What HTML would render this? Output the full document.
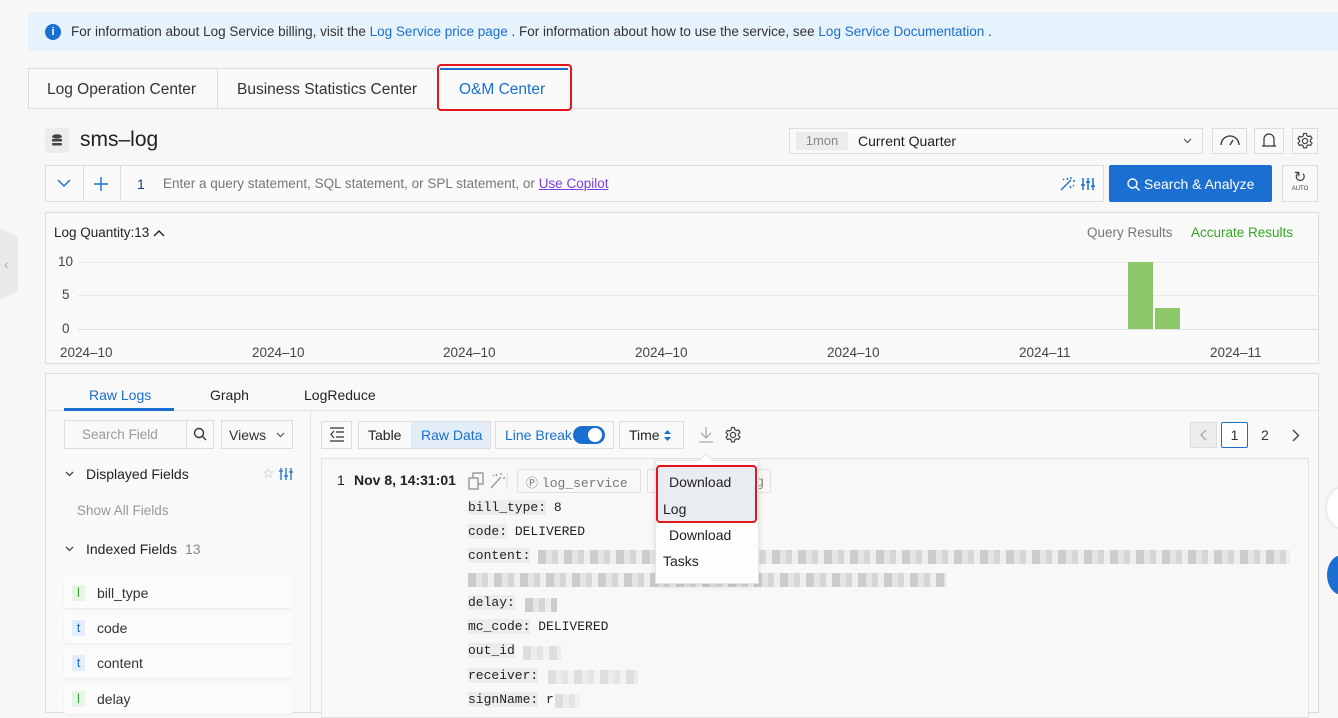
<!DOCTYPE html>
<html><head><meta charset="utf-8"><style>
*{box-sizing:border-box;margin:0;padding:0}
body{width:1338px;height:710px;overflow:hidden;background:#f7f7f7;font-family:"Liberation Sans",sans-serif;font-size:14px;color:#333;position:relative}
.a{position:absolute}
.b{border:1px solid #dcdcdc;background:#f9f9f9}
.mono{font-family:"Liberation Mono",monospace;font-size:13px}
.blue{color:#1a6fd0}
.blur{background:repeating-linear-gradient(90deg,#ccc 0 8px,#e4e4e4 8px 14px,#d6d6d6 14px 20px,#eee 20px 26px);height:14px}
.fld{position:absolute;left:64px;width:229px;height:30px;background:#fbfbfb;box-shadow:0 1px 2px rgba(0,0,0,.06);border-radius:3px}
.fld span.t{position:absolute;left:8px;top:7px;width:13px;height:16px;border-radius:2px;font-size:13px;text-align:center;line-height:16px}
.fld span.n{position:absolute;left:33px;top:7px;font-size:14px}
.kv{position:absolute;left:468px;font-family:"Liberation Mono",monospace;font-size:13px;color:#222}
.kv i{font-style:normal;background:#ececec}
</style></head><body>
<svg width="0" height="0" style="position:absolute"><defs><g id="gear"><circle cx="9" cy="9" r="2.6" fill="none" stroke="#444" stroke-width="1.3"/><path d="M7.6 1.5h2.8l.5 2.2 1.6.9 2.1-.7 1.4 2.4-1.6 1.5v1.8l1.6 1.5-1.4 2.4-2.1-.7-1.6.9-.5 2.2H7.6l-.5-2.2-1.6-.9-2.1.7-1.4-2.4 1.6-1.5V8.2L2 6.7l1.4-2.4 2.1.7 1.6-.9z" fill="none" stroke="#444" stroke-width="1.2" stroke-linejoin="round"/></g></defs></svg>
<div class="a" style="left:0;top:228px;width:18px;height:72px;background:#e9e9e9;clip-path:polygon(0 0,100% 12%,100% 88%,0 100%)"></div>
<div class="a" style="left:4px;top:256px;color:#aaa;font-size:14px">‹</div>
<div class="a" style="left:28px;top:12px;width:1310px;height:39px;background:#e6f2fc"></div>
<div class="a" style="left:45px;top:24px;width:16px;height:16px;border-radius:50%;background:#1a6fd0;color:#fff;font-size:11px;font-weight:bold;text-align:center;line-height:16px">i</div>
<div class="a" style="left:71px;top:24px;font-size:13.5px;color:#333">For information about Log Service billing, visit the <span class="blue">Log Service price page</span> . For information about how to use the service, see <span class="blue">Log Service Documentation</span> .</div>
<div class="a" style="left:28px;top:108px;width:1310px;height:1px;background:#e0e0e0"></div>
<div class="a b" style="left:28px;top:68px;width:190px;height:41px;font-size:15.5px;padding:12px 0 0 18px">Log Operation Center</div>
<div class="a b" style="left:217px;top:68px;width:221px;height:41px;font-size:15.5px;padding:12px 0 0 19px">Business Statistics Center</div>
<div class="a" style="left:440px;top:68px;width:128px;height:41px;background:#fafafa;border-top:2px solid #1a6fd0;font-size:15.5px;padding:11px 0 0 19px;color:#1a6fd0">O&amp;M Center</div>
<div class="a" style="left:437px;top:64px;width:135px;height:47px;border:2.5px solid #e4161b;border-radius:4px"></div>
<div class="a" style="left:45px;top:128px;width:24px;height:25px;background:#ececec;border-radius:3px"></div>
<svg class="a" style="left:51px;top:134px" width="12" height="13"><ellipse cx="6" cy="2.5" rx="5" ry="2.2" fill="#444"/><rect x="1" y="5" width="10" height="2.5" fill="#444"/><rect x="1" y="9" width="10" height="2.5" rx="1" fill="#444"/></svg>
<div class="a" style="left:80px;top:128px;font-size:21px;color:#222">sms–log</div>
<div class="a b" style="left:789px;top:128px;width:414px;height:26px"></div>
<div class="a" style="left:796px;top:132px;width:52px;height:18px;background:#ececec;color:#888;font-size:13px;text-align:center;line-height:18px">1mon</div>
<div class="a" style="left:858px;top:133px;font-size:14px;color:#222">Current Quarter</div>
<svg class="a" style="left:1183px;top:138px" width="9" height="6"><path d="M1 1l3.5 3.5L8 1" fill="none" stroke="#555" stroke-width="1.2"/></svg>
<div class="a b" style="left:1212px;top:128px;width:35px;height:26px"></div>
<svg class="a" style="left:1219px;top:133px" width="22" height="14"><path d="M2 12A9 9 0 0 1 20 12" fill="none" stroke="#333" stroke-width="1.3"/><path d="M11 12L14 7" stroke="#333" stroke-width="1.3"/></svg>
<div class="a b" style="left:1254px;top:128px;width:30px;height:26px"></div>
<svg class="a" style="left:1261px;top:131px" width="16" height="20"><path d="M3 15V8a5 5 0 0 1 10 0v7zM1 15h14" fill="none" stroke="#333" stroke-width="1.2"/></svg>
<div class="a b" style="left:1292px;top:128px;width:26px;height:26px"></div>
<svg class="a" style="left:1296px;top:132px" width="18" height="18"><use href="#gear"/></svg>
<div class="a b" style="left:45px;top:165px;width:1059px;height:37px;background:#fafafa"></div>
<div class="a" style="left:83px;top:165px;width:1px;height:37px;background:#ddd"></div>
<div class="a" style="left:120px;top:165px;width:1px;height:37px;background:#ddd"></div>
<svg class="a" style="left:57px;top:179px" width="14" height="9"><path d="M1 1l6 6 6-6" fill="none" stroke="#1a6fd0" stroke-width="1.5"/></svg>
<svg class="a" style="left:94px;top:177px" width="14" height="14"><path d="M7 0v14M0 7h14" stroke="#1a6fd0" stroke-width="1.4"/></svg>
<div class="a" style="left:137px;top:176px;font-size:14px;color:#1a3d7a">1</div>
<div class="a" style="left:163px;top:176px;font-size:13.5px;color:#777">Enter a query statement, SQL statement, or SPL statement, or <span style="color:#7b3fe4;text-decoration:underline">Use Copilot</span></div>
<svg class="a" style="left:1059px;top:176px" width="40" height="16"><path d="M2 14L12 4M8 2l1 2M12 1v2M14 5h2M4 3l1 1M11 10l1 2M14 9l1 1" stroke="#1a6fd0" stroke-width="1.4" fill="none"/><path d="M24 2v12M29 2v12M34 2v12M22 9h4M27 6h4M32 10h4" stroke="#1a6fd0" stroke-width="1.5"/></svg>
<div class="a" style="left:1109px;top:165px;width:163px;height:37px;background:#1a6fd0;border-radius:2px;color:#fff;font-size:14px;padding:11px 0 0 18px"><svg width="13" height="13" style="vertical-align:-2px"><circle cx="5.5" cy="5.5" r="4.5" fill="none" stroke="#fff" stroke-width="1.4"/><path d="M9 9l3.5 3.5" stroke="#fff" stroke-width="1.4"/></svg> Search &amp; Analyze</div>
<div class="a b" style="left:1282px;top:165px;width:36px;height:37px;text-align:center"><div style="font-size:15px;color:#444;margin-top:2px">↻</div><div style="font-size:6px;color:#444">AUTO</div></div>
<div class="a b" style="left:45px;top:212px;width:1274px;height:152px"></div>
<div class="a" style="left:54px;top:225px;font-size:13.5px;color:#222">Log Quantity:13 <svg width="12" height="8"><path d="M1 7l5-5 5 5" fill="none" stroke="#222" stroke-width="1.4"/></svg></div>
<div class="a" style="left:1087px;top:225px;font-size:13.5px;color:#777">Query Results</div>
<div class="a" style="left:1191px;top:225px;font-size:13.5px;color:#34a822">Accurate Results</div>
<div class="a" style="left:58px;top:254px;font-size:13.5px;color:#444">10</div>
<div class="a" style="left:62px;top:287px;font-size:13.5px;color:#444">5</div>
<div class="a" style="left:62px;top:321px;font-size:13.5px;color:#444">0</div>
<div class="a" style="left:78px;top:262px;width:1240px;height:1px;background:#e8e8e8"></div>
<div class="a" style="left:78px;top:295px;width:1240px;height:1px;background:#e8e8e8"></div>
<div class="a" style="left:78px;top:329px;width:1240px;height:1px;background:#e0e0e0"></div>
<div class="a" style="left:1128px;top:262px;width:25px;height:67px;background:#8cc86a"></div>
<div class="a" style="left:1155px;top:308px;width:25px;height:21px;background:#8cc86a"></div>
<div class="a" style="left:60px;top:345px;width:1240px;font-size:13.5px;color:#444">
<span class="a" style="left:0">2024–10</span><span class="a" style="left:192px">2024–10</span><span class="a" style="left:383px">2024–10</span><span class="a" style="left:575px">2024–10</span><span class="a" style="left:767px">2024–10</span><span class="a" style="left:959px">2024–11</span><span class="a" style="left:1150px">2024–11</span></div>
<div class="a b" style="left:45px;top:373px;width:1274px;height:340px"></div>
<div class="a" style="left:46px;top:410px;width:1272px;height:1px;background:#e4e4e4"></div>
<div class="a blue" style="left:89px;top:387px;font-size:14px">Raw Logs</div>
<div class="a" style="left:64px;top:408px;width:110px;height:3px;background:#1a6fd0"></div>
<div class="a" style="left:210px;top:387px;font-size:14px;color:#222">Graph</div>
<div class="a" style="left:304px;top:387px;font-size:14px;color:#222">LogReduce</div>
<div class="a" style="left:310px;top:411px;width:1px;height:300px;background:#e4e4e4"></div>
<div class="a b" style="left:64px;top:420px;width:123px;height:29px;color:#999;font-size:13.5px;padding:6px 0 0 17px">Search Field</div>
<div class="a b" style="left:186px;top:420px;width:28px;height:29px"></div>
<svg class="a" style="left:193px;top:427px" width="14" height="14"><circle cx="6" cy="6" r="4.5" fill="none" stroke="#333" stroke-width="1.4"/><path d="M9.5 9.5L13 13" stroke="#333" stroke-width="1.4"/></svg>
<div class="a b" style="left:221px;top:420px;width:72px;height:29px;font-size:14px;padding:6px 0 0 7px;color:#333">Views</div>
<svg class="a" style="left:276px;top:432px" width="9" height="6"><path d="M1 1l3.5 3.5L8 1" fill="none" stroke="#555" stroke-width="1.2"/></svg>
<svg class="a" style="left:65px;top:471px" width="9" height="6"><path d="M1 1l3.5 3.5L8 1" fill="none" stroke="#444" stroke-width="1.3"/></svg>
<div class="a" style="left:86px;top:466px;font-size:14px;color:#222">Displayed Fields</div>
<div class="a" style="left:262px;top:465px;font-size:14px;color:#bbb">☆</div>
<svg class="a" style="left:278px;top:467px" width="16" height="14"><path d="M3 1v12M8 1v12M13 1v12M1 4h4M6 9h4M11 5h4" stroke="#1a6fd0" stroke-width="1.3"/></svg>
<div class="a" style="left:77px;top:503px;font-size:13.5px;color:#999">Show All Fields</div>
<svg class="a" style="left:65px;top:546px" width="9" height="6"><path d="M1 1l3.5 3.5L8 1" fill="none" stroke="#444" stroke-width="1.3"/></svg>
<div class="a" style="left:86px;top:541px;font-size:14px;color:#222">Indexed Fields <span style="color:#888;margin-left:4px">13</span></div>
<div class="fld" style="top:578px"><span class="t" style="background:#e5f6e5;color:#3aa53a">l</span><span class="n">bill_type</span></div>
<div class="fld" style="top:613px"><span class="t" style="background:#e4eefa;color:#1a6fd0">t</span><span class="n">code</span></div>
<div class="fld" style="top:648px"><span class="t" style="background:#e4eefa;color:#1a6fd0">t</span><span class="n">content</span></div>
<div class="fld" style="top:684px"><span class="t" style="background:#e5f6e5;color:#3aa53a">l</span><span class="n">delay</span></div>
<div class="a b" style="left:321px;top:421px;width:31px;height:28px"></div>
<svg class="a" style="left:329px;top:427px" width="16" height="15"><path d="M1 1h14M1 14h14M7 5h8M7 10h8M5 4L2 7.5 5 11" fill="none" stroke="#333" stroke-width="1.2"/></svg>
<div class="a b" style="left:358px;top:421px;width:133px;height:28px"></div>
<div class="a" style="left:368px;top:427px;font-size:14px;color:#222">Table</div>
<div class="a" style="left:411px;top:422px;width:79px;height:26px;background:#e3edf8"></div>
<div class="a blue" style="left:421px;top:427px;font-size:14px">Raw Data</div>
<div class="a b" style="left:495px;top:421px;width:119px;height:28px"></div>
<div class="a blue" style="left:505px;top:427px;font-size:14px">Line Break</div>
<div class="a" style="left:573px;top:426px;width:32px;height:18px;border-radius:9px;background:#1a6fd0"></div>
<div class="a" style="left:588px;top:428px;width:14px;height:14px;border-radius:50%;background:#fff"></div>
<div class="a b" style="left:619px;top:421px;width:65px;height:28px;font-size:14px;padding:5px 0 0 9px;color:#222">Time</div>
<svg class="a" style="left:663px;top:429px" width="9" height="13"><path d="M1 5l3.5-4L8 5zM1 8l3.5 4L8 8z" fill="#1a6fd0"/></svg>
<svg class="a" style="left:698px;top:426px" width="16" height="18"><path d="M8 1v11M3 7l5 5 5-5M1 16h14" fill="none" stroke="#aaa" stroke-width="1.3"/></svg>
<svg class="a" style="left:724px;top:426px" width="18" height="18"><use href="#gear"/></svg>
<div class="a" style="left:1190px;top:422px;width:27px;height:26px;background:#ededed;border:1px solid #ddd"></div>
<svg class="a" style="left:1200px;top:429px" width="7" height="12"><path d="M6 1L1 6l5 5" fill="none" stroke="#aaa" stroke-width="1.3"/></svg>
<div class="a" style="left:1221px;top:422px;width:27px;height:26px;border:1px solid #1a6fd0;border-radius:2px;background:#fff;text-align:center;line-height:24px;font-size:14px">1</div>
<div class="a" style="left:1261px;top:427px;font-size:14px">2</div>
<svg class="a" style="left:1292px;top:429px" width="8" height="13"><path d="M1 1l5.5 5.5L1 12" fill="none" stroke="#444" stroke-width="1.4"/></svg>
<div class="a" style="left:321px;top:458px;width:988px;height:260px;border:1px solid #e2e2e2;background:#f8f8f8"></div>
<div class="a" style="left:337px;top:472px;font-size:14px;color:#222">1</div>
<div class="a" style="left:354px;top:472px;font-size:14px;color:#222;font-weight:bold">Nov 8, 14:31:01</div>
<svg class="a" style="left:468px;top:472px" width="40" height="18"><path d="M1 6h9v11H1zM5 6V1h10v11h-5" fill="none" stroke="#888" stroke-width="1.2"/><path d="M23 16L33 5M28 2l1 2M33 1v2M35 6h2M25 3l1 1" stroke="#888" stroke-width="1.2" fill="none"/><path d="M39 1v16" stroke="#ddd"/></svg>
<div class="a" style="left:517px;top:469px;width:124px;height:24px;border:1px solid #e0e0e0;border-radius:2px;color:#777;padding:4px 0 0 8px"><span style="font-size:12px">Ⓟ</span> <span class="mono">log_service</span></div>
<div class="a" style="left:647px;top:469px;width:124px;height:24px;border:1px solid #e0e0e0;border-radius:2px;color:#888;padding:3px 0 0 108px">g</div>
<div class="kv" style="top:500px"><i>bill_type:</i> 8</div>
<div class="kv" style="top:524px"><i>code:</i> DELIVERED</div>
<div class="kv" style="top:548px"><i>content:</i></div>
<div class="a blur" style="left:538px;top:550px;width:752px"></div>
<div class="a blur" style="left:468px;top:573px;width:478px"></div>
<div class="kv" style="top:595px"><i>delay:</i></div>
<div class="a blur" style="left:525px;top:598px;width:32px"></div>
<div class="kv" style="top:619px"><i>mc_code:</i> DELIVERED</div>
<div class="kv" style="top:643px"><i>out_id</i></div>
<div class="a blur" style="left:523px;top:646px;width:38px;opacity:.6"></div>
<div class="kv" style="top:668px"><i>receiver:</i></div>
<div class="a blur" style="left:548px;top:670px;width:90px;opacity:.6"></div>
<div class="kv" style="top:692px"><i>signName:</i> r</div>
<div class="a blur" style="left:555px;top:694px;width:25px;opacity:.6"></div>
<div class="a" style="left:655px;top:460px;width:104px;height:124px;background:#fdfdfd;border:1px solid #e4e4e4;box-shadow:0 2px 6px rgba(0,0,0,.1)"></div>
<div class="a" style="left:701px;top:455px;width:10px;height:10px;background:#fdfdfd;border-left:1px solid #e4e4e4;border-top:1px solid #e4e4e4;transform:rotate(45deg)"></div>
<div class="a" style="left:658px;top:466px;width:97px;height:56px;background:#e9edf2"></div>
<div class="a" style="left:669px;top:474px;font-size:14px;color:#222">Download</div>
<div class="a" style="left:663px;top:501px;font-size:14px;color:#222">Log</div>
<div class="a" style="left:669px;top:527px;font-size:14px;color:#222">Download</div>
<div class="a" style="left:663px;top:553px;font-size:14px;color:#222">Tasks</div>
<div class="a" style="left:656px;top:465px;width:101px;height:58px;border:2.5px solid #e4161b;border-radius:4px"></div>
<div class="a" style="left:1327px;top:488px;width:30px;height:40px;border-radius:50%;background:#fff;box-shadow:0 0 4px rgba(0,0,0,.15)"></div>
<div class="a" style="left:1327px;top:555px;width:30px;height:40px;border-radius:50%;background:#1a6fd0"></div>
</body></html>
